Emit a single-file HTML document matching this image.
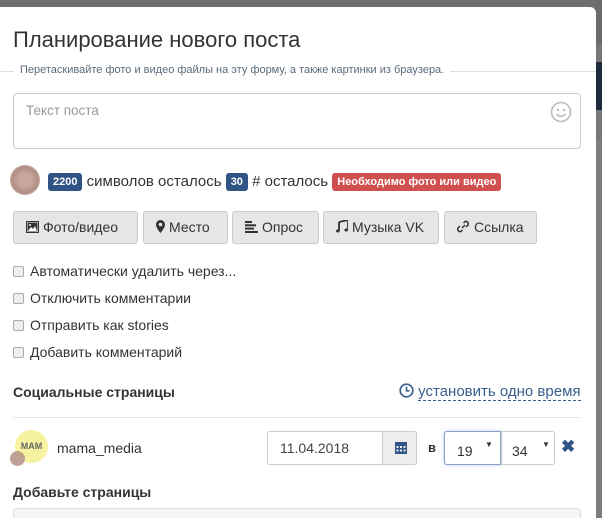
<!DOCTYPE html>
<html><head><meta charset="utf-8"><style>
*{box-sizing:border-box;margin:0;padding:0}
body{width:602px;height:518px;overflow:hidden;background:#6e6e6e;font-family:"Liberation Sans",sans-serif;position:relative;color:#333}
.strip{position:absolute;left:596px;width:6px}
.modal{position:absolute;left:0;top:7px;width:596px;height:511px;background:#fff;border-radius:0 6px 0 0;overflow:hidden}
.in{position:absolute;left:0;top:-7px;width:596px;height:518px}
.abs{position:absolute}
h1{position:absolute;left:13px;top:27px;font-size:22px;font-weight:normal;color:#333}
.hint{position:absolute;left:0;top:71px;width:596px;height:1px;background:#ddd}
.hintt{position:absolute;left:14px;top:64px;background:#fff;padding:0 6px;font-size:11px;color:#5a6b7d}
.ta{position:absolute;left:13px;top:93px;width:568px;height:56px;border:1px solid #ccc;border-radius:4px}
.ta span{position:absolute;left:12px;top:9px;font-size:13.5px;color:#999}
.badge{display:inline-block;color:#fff;font-weight:bold;font-size:11px;padding:3px 5px;border-radius:3px;vertical-align:1px}
.btn{position:absolute;top:211px;height:33px;background:#e6e6e6;border:1px solid #ccc;border-radius:3px;font-size:14px;color:#333;line-height:31px;padding-left:12px}
.cb{position:absolute;left:13px;font-size:14px;color:#333}
.cb i{display:inline-block;width:11px;height:11px;border:1px solid #aaa;border-radius:2px;background:#eee;margin-right:6px;vertical-align:-1px}
</style></head><body>
<div class="strip" style="top:0;height:45px;background:#6b6b6b"></div>
<div class="strip" style="top:45px;height:17px;background:#777"></div>
<div class="strip" style="top:62px;height:48px;background:#1d2b3c"></div>
<div class="strip" style="top:110px;height:30px;background:#777"></div>
<div class="strip" style="top:140px;height:378px;background:#7d7d7d"></div>
<div class="modal"><div class="in">
<h1>Планирование нового поста</h1>
<div class="hint"></div>
<div class="hintt">Перетаскивайте фото и видео файлы на эту форму, а также картинки из браузера.</div>
<div class="ta"><span>Текст поста</span>
<svg class="abs" style="left:536px;top:7px" width="22" height="22" viewBox="0 0 22 22"><circle cx="11" cy="11" r="9.5" fill="none" stroke="#bbb" stroke-width="1.6"/><circle cx="8" cy="9" r="1.2" fill="#bbb"/><circle cx="14" cy="9" r="1.2" fill="#bbb"/><path d="M6.5 13 Q11 17.5 15.5 13" fill="none" stroke="#bbb" stroke-width="1.6"/></svg></div>
<div class="abs" style="left:10px;top:165px;width:30px;height:30px;border-radius:50%;background:radial-gradient(circle,#c9a79d 30%,#b28f84 60%,rgba(200,170,160,0.2) 100%)"></div>
<div class="abs" style="left:48px;top:173px;font-size:15px;white-space:nowrap"><span class="badge" style="background:#2f5485">2200</span> символов осталось <span class="badge" style="background:#2f5485">30</span> # осталось <span class="badge" style="background:#d0504f">Необходимо фото или видео</span></div>
<div class="btn" style="left:13px;width:125px"><svg width="13" height="12" style="vertical-align:-1px;margin-right:4px" viewBox="0 0 13 12"><rect x="0.5" y="0.5" width="12" height="11" fill="#fff" stroke="#333"/><rect x="1.5" y="1.5" width="10" height="9" fill="#333"/><path d="M2 10 L5 6 L7 8 L9 5 L11 10Z" fill="#fff"/><circle cx="4" cy="4" r="1" fill="#fff"/></svg>Фото/видео</div>
<div class="btn" style="left:143px;width:85px"><svg width="9" height="13" style="vertical-align:-1px;margin-right:4px" viewBox="0 0 9 13"><path d="M4.5 0A4.5 4.5 0 0 0 0 4.5C0 8 4.5 13 4.5 13S9 8 9 4.5A4.5 4.5 0 0 0 4.5 0ZM4.5 6.3A1.8 1.8 0 1 1 4.5 2.7A1.8 1.8 0 0 1 4.5 6.3Z" fill="#333"/></svg>Место</div>
<div class="btn" style="left:232px;width:87px"><svg width="13" height="12" style="vertical-align:-1px;margin-right:4px" viewBox="0 0 13 12"><rect y="0" width="7" height="2" fill="#333"/><rect y="3.3" width="11" height="2" fill="#333"/><rect y="6.6" width="9" height="2" fill="#333"/><rect y="10" width="13" height="2" fill="#333"/></svg>Опрос</div>
<div class="btn" style="left:323px;width:116px"><svg width="12" height="13" style="vertical-align:-1px;margin-right:4px" viewBox="0 0 12 13"><path d="M3 2 L12 0 V10" fill="none" stroke="#333" stroke-width="1.8"/><path d="M3 2 V11" stroke="#333" stroke-width="1.8"/><ellipse cx="1.8" cy="11" rx="1.8" ry="1.5" fill="#333"/><ellipse cx="10.2" cy="10" rx="1.8" ry="1.5" fill="#333"/></svg>Музыка VK</div>
<div class="btn" style="left:444px;width:93px"><svg width="12" height="13" style="vertical-align:-1px;margin-right:5px" viewBox="0 0 12 13"><path d="M5 8 L8 5 M6.5 3 L8 1.5 A2.5 2.5 0 0 1 11 5 L9 7 M5.5 10 L4 11.5 A2.5 2.5 0 0 1 1 8 L3 6" fill="none" stroke="#333" stroke-width="1.5"/></svg>Ссылка</div>
<div class="cb" style="top:263px"><i></i>Автоматически удалить через...</div>
<div class="cb" style="top:290px"><i></i>Отключить комментарии</div>
<div class="cb" style="top:317px"><i></i>Отправить как stories</div>
<div class="cb" style="top:344px"><i></i>Добавить комментарий</div>
<div class="abs" style="left:13px;top:384px;font-size:14px;font-weight:bold;color:#333">Социальные страницы</div>
<div class="abs" style="left:399px;top:383px;font-size:15px;color:#3a5f8f;white-space:nowrap"><svg width="15" height="15" style="vertical-align:-2px" viewBox="0 0 15 15"><circle cx="7.5" cy="7.5" r="6.3" fill="none" stroke="#3a5f8f" stroke-width="1.7"/><path d="M7.5 3.5 V7.8 H10.5" fill="none" stroke="#3a5f8f" stroke-width="1.6"/></svg> <span style="border-bottom:1px dashed #3a5f8f">установить одно время</span></div>
<div class="abs" style="left:13px;top:417px;width:568px;height:1px;background:#e5e5e5"></div>
<div class="abs" style="left:15px;top:430px;width:33px;height:33px;border-radius:50%;background:#f5f3a0;font-size:9px;font-weight:bold;color:#666;line-height:33px;text-align:center">MAM</div>
<div class="abs" style="left:10px;top:451px;width:15px;height:15px;border-radius:50%;background:#b59085;opacity:.85"></div>
<div class="abs" style="left:57px;top:440px;font-size:14px">mama_media</div>
<div class="abs" style="left:267px;top:431px;width:150px;height:34px;border:1px solid #ccc;border-radius:3px;overflow:hidden"><span class="abs" style="left:12px;top:8px;font-size:14px;color:#444">11.04.2018</span><div class="abs" style="left:114px;top:0;width:36px;height:34px;background:#eee;border-left:1px solid #ccc"><svg class="abs" style="left:12px;top:10px" width="12" height="12" viewBox="0 0 12 12"><rect width="12" height="12" fill="#2f5485"/><g fill="#eee"><rect x="1.5" y="4" width="2" height="2"/><rect x="5" y="4" width="2" height="2"/><rect x="8.5" y="4" width="2" height="2"/><rect x="1.5" y="7.5" width="2" height="2"/><rect x="5" y="7.5" width="2" height="2"/><rect x="8.5" y="7.5" width="2" height="2"/></g></svg></div></div>
<div class="abs" style="left:428px;top:440px;font-size:13px;font-weight:bold">в</div>
<div class="abs" style="left:444px;top:431px;width:57px;height:34px;border:1px solid #8aa4c8;border-radius:3px 0 0 3px;box-shadow:0 0 3px rgba(100,140,200,.5)"><span class="abs" style="left:12px;top:11px;font-size:14px">19</span><span class="abs" style="left:40px;top:8px;font-size:8px">▼</span></div>
<div class="abs" style="left:501px;top:431px;width:54px;height:34px;border:1px solid #ccc;border-radius:0 3px 3px 0"><span class="abs" style="left:10px;top:11px;font-size:14px">34</span><span class="abs" style="left:40px;top:8px;font-size:8px">▼</span></div>
<div class="abs" style="left:561px;top:437px;font-size:17px;font-weight:bold;color:#2f5485">✖</div>
<div class="abs" style="left:13px;top:484px;font-size:14px;font-weight:bold">Добавьте страницы</div>
<div class="abs" style="left:13px;top:508px;width:568px;height:30px;border:1px solid #ddd;border-radius:3px;background:#f5f5f5"></div>
</div></div>
</body></html>
